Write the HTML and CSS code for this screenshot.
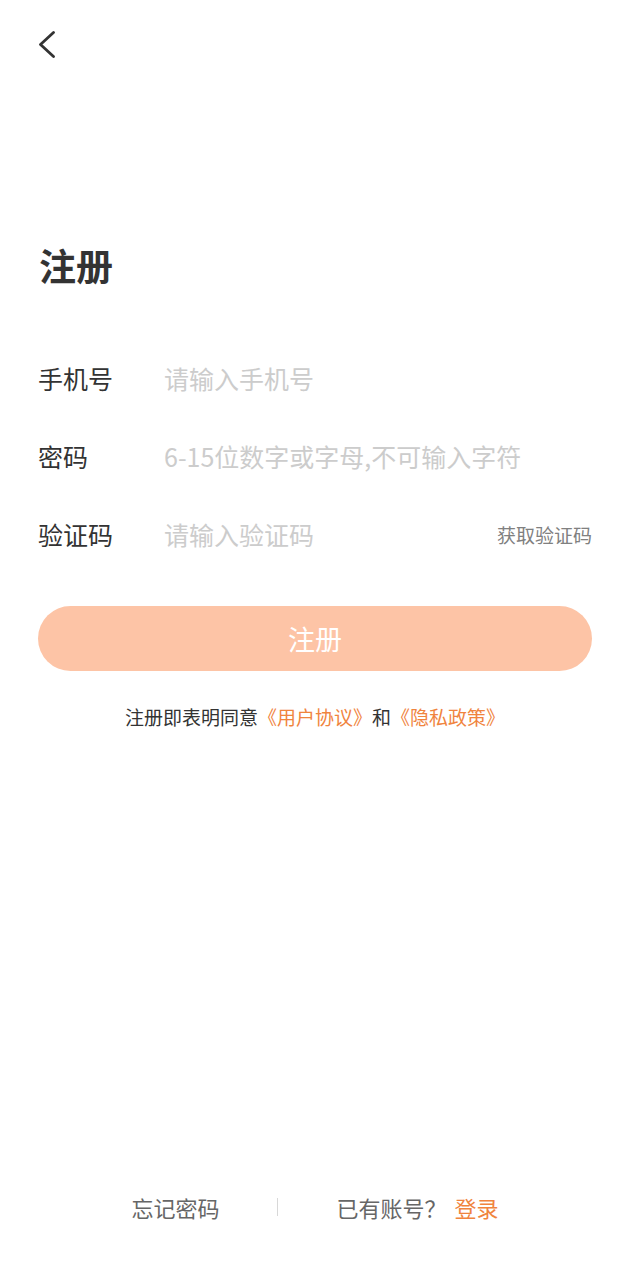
FILE: index.html
```html
<!DOCTYPE html>
<html lang="zh-CN">
<head>
    <meta charset="UTF-8">
    <meta name="viewport" content="width=device-width, initial-scale=1.0">
    <title>注册</title>
    <link rel="stylesheet" href="styles.css">
</head>
<body>
    <div class="page">
        <header class="top-bar">
            <a href="#" class="back-btn" aria-label="返回">
                <svg width="18" height="28" viewBox="0 0 18 28">
                    <polyline points="15.5,1.5 2.5,13.5 15.5,25.5" fill="none" stroke="#333" stroke-width="2.8" stroke-linecap="round" stroke-linejoin="round"/>
                </svg>
            </a>
        </header>

        <h1 class="title">注册</h1>

        <form class="form" onsubmit="return false;">
            <div class="row">
                <label for="phone">手机号</label>
                <input type="tel" id="phone" placeholder="请输入手机号">
            </div>
            <div class="row">
                <label for="password">密码</label>
                <input type="password" id="password" placeholder="6-15位数字或字母,不可输入字符">
            </div>
            <div class="row">
                <label for="code">验证码</label>
                <input type="text" id="code" placeholder="请输入验证码">
                <a href="#" class="code-btn">获取验证码</a>
            </div>

            <button type="submit" class="submit-btn">注册</button>
        </form>

        <p class="agreement">注册即表明同意<a href="#">《用户协议》</a>和<a href="#">《隐私政策》</a></p>

        <footer class="bottom-links">
            <a href="#" class="muted">忘记密码</a>
            <span class="divider"></span>
            <span class="muted">已有账号？</span>
            <a href="#" class="login-link">登录</a>
        </footer>
    </div>
</body>
</html>
```

FILE: styles.css
```css
/* Register page */
body {
    margin: 0;
    padding: 0;
    background-color: #ffffff;
    color: #333333;
    font-family: "Noto Sans CJK SC", "Noto Sans", sans-serif;
}

a {
    text-decoration: none;
}

.page {
    min-height: 100vh;
    box-sizing: border-box;
    padding: 0 38px;
    display: flex;
    flex-direction: column;
}

.top-bar {
    height: 90px;
    padding-top: 31px;
    box-sizing: border-box;
}

.back-btn {
    display: block;
    width: 18px;
    height: 28px;
}

.back-btn svg {
    display: block;
}

.title {
    margin: 157px 0 0 1px;
    font-size: 37px;
    line-height: 37px;
    font-weight: 700;
    color: #333333;
}

.form {
    margin-top: 55px;
    display: flex;
    flex-direction: column;
}

.row {
    height: 78px;
    display: flex;
    align-items: center;
}

.row label {
    width: 126px;
    flex-shrink: 0;
    font-size: 25px;
    color: #333333;
}

.row input {
    flex: 1;
    min-width: 0;
    border: none;
    outline: none;
    padding: 0;
    font-family: inherit;
    font-size: 25px;
    color: #333333;
    background: transparent;
}

.row input::placeholder {
    color: #cccccc;
}

.code-btn {
    font-size: 19px;
    color: #808080;
    white-space: nowrap;
}

.submit-btn {
    margin-top: 33px;
    height: 65px;
    width: 100%;
    border: none;
    border-radius: 33px;
    background-color: #fdc4a6;
    color: #ffffff;
    font-family: inherit;
    font-size: 27px;
    cursor: pointer;
}

.agreement {
    margin: 34px 0 0;
    text-align: center;
    font-size: 19px;
    line-height: 24px;
    color: #333333;
}

.agreement a {
    color: #f0843e;
}

.bottom-links {
    margin-top: auto;
    padding-bottom: 58px;
    display: flex;
    justify-content: center;
    align-items: center;
    font-size: 22px;
    line-height: 30px;
}

.muted {
    color: #666666;
}

.divider {
    width: 1px;
    height: 18px;
    margin: 0 58px;
    background-color: #d8d8d8;
}

.login-link {
    margin-left: 8px;
    color: #f0843e;
}
```
